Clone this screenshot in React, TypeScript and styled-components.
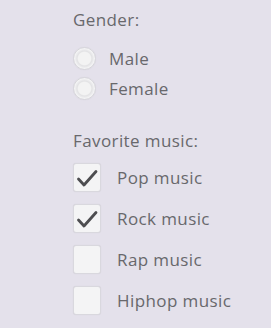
import React from 'react';
import styled, { createGlobalStyle } from 'styled-components';

const GlobalStyle = createGlobalStyle`
  html, body {
    margin: 0;
    padding: 0;
    background: #e4e1eb;
  }
  body {
    font-family: "Open Sans", "DejaVu Sans", sans-serif;
  }
`;

/* ─── Styled ──────────────────────────────────────────────────────── */
const Page = styled.div`
  width: 271px;
  height: 328px;
  box-sizing: border-box;
  padding: 8px 0 0 73px;
  color: #68686c;
  font-size: 17px;
  letter-spacing: 0.4px;
`;

const Title = styled.div<{ $gap: number }>`
  height: 24px;
  line-height: 24px;
  margin-bottom: ${({ $gap }) => $gap}px;
`;

const RadioList = styled.div`
  display: flex;
  flex-direction: column;
  margin-bottom: 26px;
`;

const RadioRow = styled.label`
  display: flex;
  align-items: center;
  gap: 13px;
  height: 30px;
`;

const RadioDot = styled.span`
  width: 23px;
  height: 23px;
  box-sizing: border-box;
  border-radius: 50%;
  border: 1px solid #d6d5da;
  background: radial-gradient(circle at 50% 50%, #f3f3f3 0 42%, #e2e2e4 50%, #f3f3f4 66%);
  box-shadow: 0 0 1px rgba(0, 0, 0, 0.08);
`;

const CheckList = styled.div`
  display: flex;
  flex-direction: column;
`;

const CheckRow = styled.label`
  display: flex;
  align-items: center;
  gap: 16px;
  height: 41px;
`;

const Box = styled.span`
  width: 28px;
  height: 29px;
  box-sizing: border-box;
  border-radius: 3px;
  border: 1px solid #d9d8de;
  background: #f4f4f5;
  box-shadow: 0 0 1px rgba(0, 0, 0, 0.1);
  display: flex;
  align-items: center;
  justify-content: center;
`;

const Check = () => (
  <svg width="22" height="18" viewBox="0 0 22 18">
    <path d="M2.5 10 L8 16 L20 2.5" fill="none" stroke="#4d4d50" strokeWidth="2.8" strokeLinecap="round" strokeLinejoin="round" />
  </svg>
);

const music = [
  { label: 'Pop music', checked: true },
  { label: 'Rock music', checked: true },
  { label: 'Rap music', checked: false },
  { label: 'Hiphop music', checked: false },
];

export default function App() {
  return (
    <>
      <GlobalStyle />
      <Page>
        <Title $gap={11}>Gender:</Title>
        <RadioList>
          {['Male', 'Female'].map((g) => (
            <RadioRow key={g}>
              <RadioDot />
              <span>{g}</span>
            </RadioRow>
          ))}
        </RadioList>
        <Title $gap={4}>Favorite music:</Title>
        <CheckList>
          {music.map((m) => (
            <CheckRow key={m.label}>
              <Box>{m.checked && <Check />}</Box>
              <span>{m.label}</span>
            </CheckRow>
          ))}
        </CheckList>
      </Page>
    </>
  );
}
